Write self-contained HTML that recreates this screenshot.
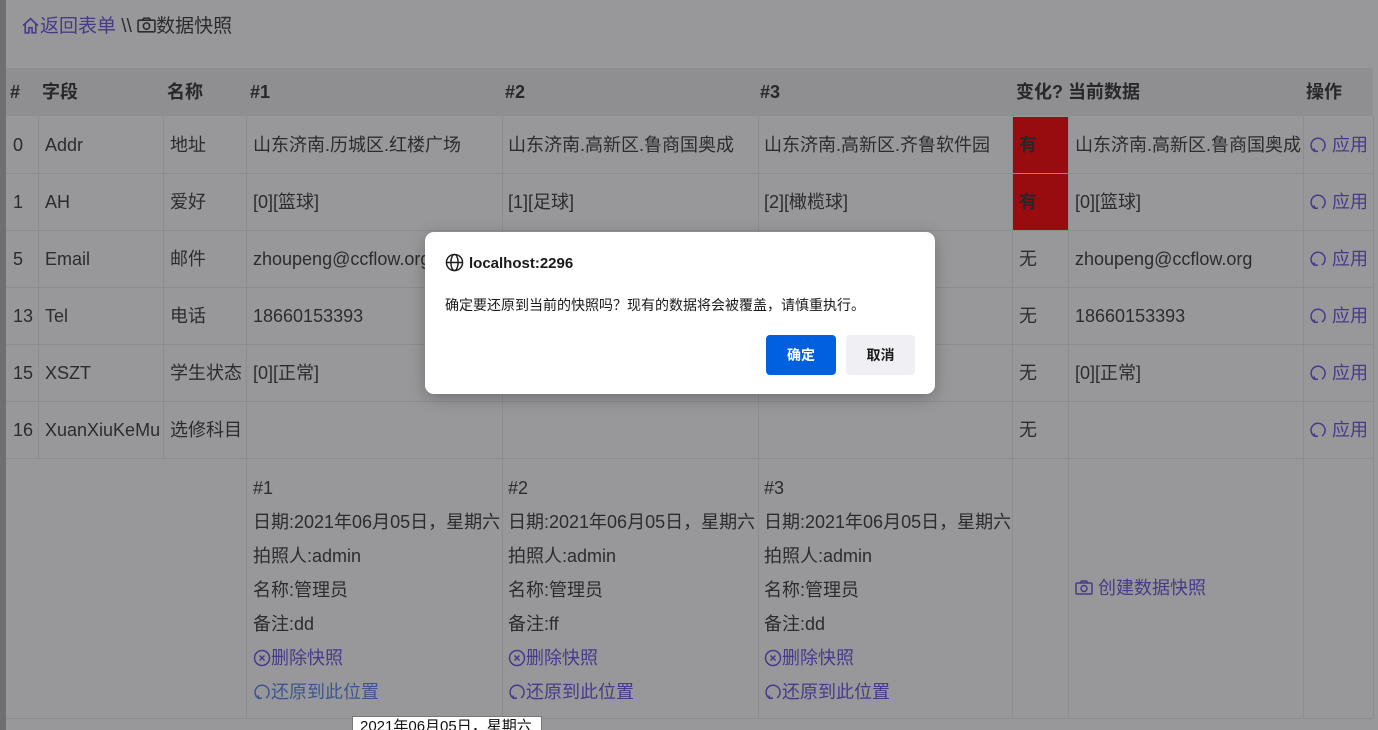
<!DOCTYPE html>
<html><head><meta charset="utf-8"><style>
*{margin:0;padding:0;box-sizing:border-box}
html,body{width:1378px;height:730px;overflow:hidden}
body{background:#98989a;position:relative;font-family:"Liberation Sans","Noto Sans CJK SC",sans-serif;font-size:18px;color:#2c2c2e}
.a{position:absolute;white-space:nowrap;line-height:20px}
.h{font-weight:bold;font-size:18px;color:#28282a}
.l{color:#453b8a}
.r{color:#3d5590}
.vl{position:absolute;width:1px;background:#8d8d8f}
.hl{position:absolute;height:1px;background:#8d8d8f}
svg{vertical-align:-3px}
</style></head><body>
<div style="position:absolute;left:0;top:0;width:6px;height:730px;background:#6f6f71"></div>
<div class="a" style="left:21px;top:16px;font-size:19px"><span class="l"><svg width="19" height="19" viewBox="0 0 18 18" fill="none" stroke="#453b8a" stroke-width="1.5"><path d="M2 9L9 2.5 16 9M4 7.5V16h3.5v-5h3v5H14V7.5"/></svg>返回表单</span> \\ <svg width="19" height="19" viewBox="0 0 18 18" fill="none" stroke="#2c2c2e" stroke-width="1.5"><rect x="1" y="4" width="16" height="11" rx="1"/><path d="M5 4l1.5-2h5L13 4"/><circle cx="9" cy="9.5" r="3"/></svg>数据快照</div>
<div style="position:absolute;left:6px;top:68px;width:1367px;height:48px;background:#8f8f91"></div>
<div class="a h" style="left:10px;top:82px">#</div>
<div class="a h" style="left:42px;top:82px">字段</div>
<div class="a h" style="left:167px;top:82px">名称</div>
<div class="a h" style="left:250px;top:82px">#1</div>
<div class="a h" style="left:505px;top:82px">#2</div>
<div class="a h" style="left:760px;top:82px">#3</div>
<div class="a h" style="left:1016px;top:82px">变化? 当前数据</div>
<div class="a h" style="left:1306px;top:82px">操作</div>
<div style="position:absolute;left:1013px;top:117px;width:55px;height:56px;background:#980c10"></div>
<div style="position:absolute;left:1013px;top:174px;width:55px;height:56px;background:#980c10"></div>
<div class="vl" style="left:38px;top:116px;height:342px"></div>
<div class="vl" style="left:163px;top:116px;height:342px"></div>
<div class="vl" style="left:246px;top:116px;height:602px"></div>
<div class="vl" style="left:502px;top:116px;height:602px"></div>
<div class="vl" style="left:758px;top:116px;height:602px"></div>
<div class="vl" style="left:1012px;top:116px;height:602px"></div>
<div class="vl" style="left:1068px;top:116px;height:602px"></div>
<div class="vl" style="left:1303px;top:116px;height:602px"></div>
<div class="vl" style="left:1373px;top:116px;height:602px"></div>
<div class="hl" style="left:6px;top:173px;width:1367px"></div>
<div class="hl" style="left:6px;top:230px;width:1367px"></div>
<div class="hl" style="left:6px;top:287px;width:1367px"></div>
<div class="hl" style="left:6px;top:344px;width:1367px"></div>
<div class="hl" style="left:6px;top:401px;width:1367px"></div>
<div class="hl" style="left:6px;top:458px;width:1367px"></div>
<div class="hl" style="left:6px;top:718px;width:1367px"></div>

<div class="a" style="left:13px;top:135px">0</div><div class="a" style="left:45px;top:135px">Addr</div><div class="a" style="left:170px;top:135px">地址</div><div class="a" style="left:253px;top:135px">山东济南.历城区.红楼广场</div><div class="a" style="left:508px;top:135px">山东济南.高新区.鲁商国奥成</div><div class="a" style="left:764px;top:135px">山东济南.高新区.齐鲁软件园</div><div class="a h" style="left:1019px;top:135px">有</div><div class="a" style="left:1075px;top:135px">山东济南.高新区.鲁商国奥成</div>
<div class="a" style="left:13px;top:192px">1</div><div class="a" style="left:45px;top:192px">AH</div><div class="a" style="left:170px;top:192px">爱好</div><div class="a" style="left:253px;top:192px">[0][篮球]</div><div class="a" style="left:508px;top:192px">[1][足球]</div><div class="a" style="left:764px;top:192px">[2][橄榄球]</div><div class="a h" style="left:1019px;top:192px">有</div><div class="a" style="left:1075px;top:192px">[0][篮球]</div>
<div class="a" style="left:13px;top:249px">5</div><div class="a" style="left:45px;top:249px">Email</div><div class="a" style="left:170px;top:249px">邮件</div><div class="a" style="left:253px;top:249px">zhoupeng@ccflow.org</div><div class="a" style="left:1019px;top:249px">无</div><div class="a" style="left:1075px;top:249px">zhoupeng@ccflow.org</div>
<div class="a" style="left:13px;top:306px">13</div><div class="a" style="left:45px;top:306px">Tel</div><div class="a" style="left:170px;top:306px">电话</div><div class="a" style="left:253px;top:306px">18660153393</div><div class="a" style="left:1019px;top:306px">无</div><div class="a" style="left:1075px;top:306px">18660153393</div>
<div class="a" style="left:13px;top:363px">15</div><div class="a" style="left:45px;top:363px">XSZT</div><div class="a" style="left:170px;top:363px">学生状态</div><div class="a" style="left:253px;top:363px">[0][正常]</div><div class="a" style="left:1019px;top:363px">无</div><div class="a" style="left:1075px;top:363px">[0][正常]</div>
<div class="a" style="left:13px;top:420px">16</div><div class="a" style="left:45px;top:420px">XuanXiuKeMu</div><div class="a" style="left:170px;top:420px">选修科目</div><div class="a" style="left:1019px;top:420px">无</div>
<div class="a l" style="left:1309px;top:135px"><svg width="18" height="18" viewBox="0 0 18 18" fill="none" stroke="#453b8a" stroke-width="1.5"><path d="M13 15A7 7 0 1 0 6 15.5M6 15.5l-1-3M6 15.5l3-.5"/></svg> 应用</div>
<div class="a l" style="left:1309px;top:192px"><svg width="18" height="18" viewBox="0 0 18 18" fill="none" stroke="#453b8a" stroke-width="1.5"><path d="M13 15A7 7 0 1 0 6 15.5M6 15.5l-1-3M6 15.5l3-.5"/></svg> 应用</div>
<div class="a l" style="left:1309px;top:249px"><svg width="18" height="18" viewBox="0 0 18 18" fill="none" stroke="#453b8a" stroke-width="1.5"><path d="M13 15A7 7 0 1 0 6 15.5M6 15.5l-1-3M6 15.5l3-.5"/></svg> 应用</div>
<div class="a l" style="left:1309px;top:306px"><svg width="18" height="18" viewBox="0 0 18 18" fill="none" stroke="#453b8a" stroke-width="1.5"><path d="M13 15A7 7 0 1 0 6 15.5M6 15.5l-1-3M6 15.5l3-.5"/></svg> 应用</div>
<div class="a l" style="left:1309px;top:363px"><svg width="18" height="18" viewBox="0 0 18 18" fill="none" stroke="#453b8a" stroke-width="1.5"><path d="M13 15A7 7 0 1 0 6 15.5M6 15.5l-1-3M6 15.5l3-.5"/></svg> 应用</div>
<div class="a l" style="left:1309px;top:420px"><svg width="18" height="18" viewBox="0 0 18 18" fill="none" stroke="#453b8a" stroke-width="1.5"><path d="M13 15A7 7 0 1 0 6 15.5M6 15.5l-1-3M6 15.5l3-.5"/></svg> 应用</div>

<div class="a" style="left:253px;top:471px;line-height:34px">#1<br>日期:2021年06月05日，星期六<br>拍照人:admin<br>名称:管理员<br>备注:dd<br><span class="l"><svg width="18" height="18" viewBox="0 0 18 18" fill="none" stroke="#453b8a" stroke-width="1.5"><circle cx="9" cy="9" r="7.5"/><path d="M6.5 6.5l5 5M11.5 6.5l-5 5"/></svg>删除快照</span><br><span class="r"><svg width="18" height="18" viewBox="0 0 18 18" fill="none" stroke="#3d5590" stroke-width="1.5"><path d="M13 15A7 7 0 1 0 6 15.5M6 15.5l-1-3M6 15.5l3-.5"/></svg>还原到此位置</span></div>
<div class="a" style="left:508px;top:471px;line-height:34px">#2<br>日期:2021年06月05日，星期六<br>拍照人:admin<br>名称:管理员<br>备注:ff<br><span class="l"><svg width="18" height="18" viewBox="0 0 18 18" fill="none" stroke="#453b8a" stroke-width="1.5"><circle cx="9" cy="9" r="7.5"/><path d="M6.5 6.5l5 5M11.5 6.5l-5 5"/></svg>删除快照</span><br><span class="l"><svg width="18" height="18" viewBox="0 0 18 18" fill="none" stroke="#453b8a" stroke-width="1.5"><path d="M13 15A7 7 0 1 0 6 15.5M6 15.5l-1-3M6 15.5l3-.5"/></svg>还原到此位置</span></div>
<div class="a" style="left:764px;top:471px;line-height:34px">#3<br>日期:2021年06月05日，星期六<br>拍照人:admin<br>名称:管理员<br>备注:dd<br><span class="l"><svg width="18" height="18" viewBox="0 0 18 18" fill="none" stroke="#453b8a" stroke-width="1.5"><circle cx="9" cy="9" r="7.5"/><path d="M6.5 6.5l5 5M11.5 6.5l-5 5"/></svg>删除快照</span><br><span class="l"><svg width="18" height="18" viewBox="0 0 18 18" fill="none" stroke="#453b8a" stroke-width="1.5"><path d="M13 15A7 7 0 1 0 6 15.5M6 15.5l-1-3M6 15.5l3-.5"/></svg>还原到此位置</span></div>
<div class="a l" style="left:1075px;top:578px"><svg width="18" height="18" viewBox="0 0 18 18" fill="none" stroke="#453b8a" stroke-width="1.5"><rect x="1" y="4" width="16" height="11" rx="1"/><path d="M5 4l1.5-2h5L13 4"/><circle cx="9" cy="9.5" r="3"/></svg> 创建数据快照</div>

<div style="position:absolute;left:352px;top:716px;width:190px;height:20px;background:#fff;border:1px solid #777;font-size:15px;padding-left:7px;line-height:20px;color:#111">2021年06月05日，星期六</div>

<div style="position:absolute;left:425px;top:232px;width:510px;height:162px;background:#fff;border-radius:9px;box-shadow:0 4px 16px rgba(0,0,0,.25);color:#1a1a1a">
<div class="a" style="left:20px;top:21px;font-weight:bold;font-size:15px"><svg width="19" height="19" viewBox="0 0 20 20" fill="none" stroke="#1a1a1a" stroke-width="1.5" style="vertical-align:-4px;margin-right:5px"><circle cx="10" cy="10" r="8.5"/><ellipse cx="10" cy="10" rx="3.8" ry="8.5"/><path d="M1.5 10h17"/></svg>localhost:2296</div>
<div class="a" style="left:20px;top:63px;font-size:14px">确定要还原到当前的快照吗？现有的数据将会被覆盖，请慎重执行。</div>
<div style="position:absolute;left:341px;top:103px;width:70px;height:40px;background:#0060df;border-radius:4px;color:#fff;font-weight:bold;font-size:14px;text-align:center;line-height:40px">确定</div>
<div style="position:absolute;left:421px;top:103px;width:69px;height:40px;background:#f0f0f4;border-radius:4px;font-weight:bold;font-size:14px;text-align:center;line-height:40px">取消</div>
</div>
</body></html>
